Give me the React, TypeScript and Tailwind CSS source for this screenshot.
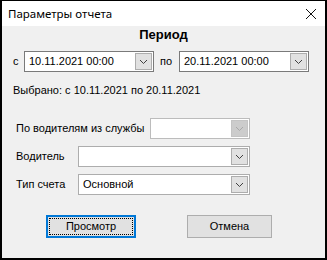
const Chevron = ({ color = "#555" }: { color?: string }) => (
  <svg width="9" height="6" viewBox="0 0 9 6">
    <path d="M1 1 L4.5 4.5 L8 1" fill="none" stroke={color} strokeWidth="1" />
  </svg>
);

const Combo = ({
  value,
  width,
  disabled,
  dark,
}: {
  value?: string;
  width: string;
  disabled?: boolean;
  dark?: boolean;
}) => (
  <div
    className={`${width} h-[21px] flex bg-white border p-[1px] ${
      dark ? "border-[#7a7a7a]" : disabled ? "border-[#bcbcbc]" : "border-[#adadad]"
    }`}
  >
    <div className="flex-1 pl-[3px] text-[11px] leading-[17px] text-black truncate">{value}</div>
    <div
      className={`w-[17px] flex items-center justify-center border ${
        disabled ? "bg-[#cccccc] border-[#c4c4c4]" : "bg-[#e1e1e1] border-[#adadad]"
      }`}
    >
      <Chevron color={disabled ? "#a8a8a8" : "#404040"} />
    </div>
  </div>
);

export default function App() {
  return (
    <div
      className="w-[327px] h-[260px] flex flex-col border-black border-t border-x-2 border-b-2 bg-[#f0f0f0] text-black"
      style={{ fontFamily: '"Liberation Sans", Arial, sans-serif' }}
    >
      <div className="h-[25px] bg-white flex items-center justify-between pl-[6px] pr-[8px]">
        <span className="text-[11.5px] text-black" style={{ fontFamily: '"Noto Sans", sans-serif' }}>
          Параметры отчета
        </span>
        <svg width="12" height="12" viewBox="0 0 12 12">
          <path d="M1 1 L11 11 M11 1 L1 11" stroke="#111" strokeWidth="1" />
        </svg>
      </div>

      <div className="mt-[1px] text-center text-[13px] font-bold leading-[15px]">Период</div>

      <div className="mt-[9px] flex items-center pl-[11px]">
        <span className="text-[11px] w-[11px]">с</span>
        <Combo value="10.11.2021 00:00" width="w-[130px]" dark />
        <span className="text-[11px] ml-[6px] w-[19px]">по</span>
        <Combo value="20.11.2021 00:00" width="w-[130px]" dark />
      </div>

      <div className="mt-[12px] pl-[11px] text-[11px] leading-[13px]">
        Выбрано: с 10.11.2021 по 20.11.2021
      </div>

      <div className="mt-[21px] flex flex-col gap-[7px] pl-[14px]">
        <div className="flex items-center">
          <span className="text-[11px] w-[134px]">По водителям из службы</span>
          <Combo width="w-[100px]" disabled />
        </div>
        <div className="flex items-center">
          <span className="text-[11px] w-[62px]">Водитель</span>
          <Combo width="w-[172px]" />
        </div>
        <div className="flex items-center">
          <span className="text-[11px] w-[62px]">Тип счета</span>
          <Combo value="Основной" width="w-[172px]" />
        </div>
      </div>

      <div className="mt-[20px] flex pl-[44px] gap-[51px]">
        <div className="w-[90px] h-[23px] border-2 border-[#0078d7] bg-[#e1e1e1] p-[1px]">
          <div className="h-full border border-dotted border-black flex items-center justify-center text-[11px]">
            Просмотр
          </div>
        </div>
        <div className="w-[85px] h-[23px] border border-[#adadad] bg-[#e1e1e1] flex items-center justify-center text-[11px]">
          Отмена
        </div>
      </div>
    </div>
  );
}
